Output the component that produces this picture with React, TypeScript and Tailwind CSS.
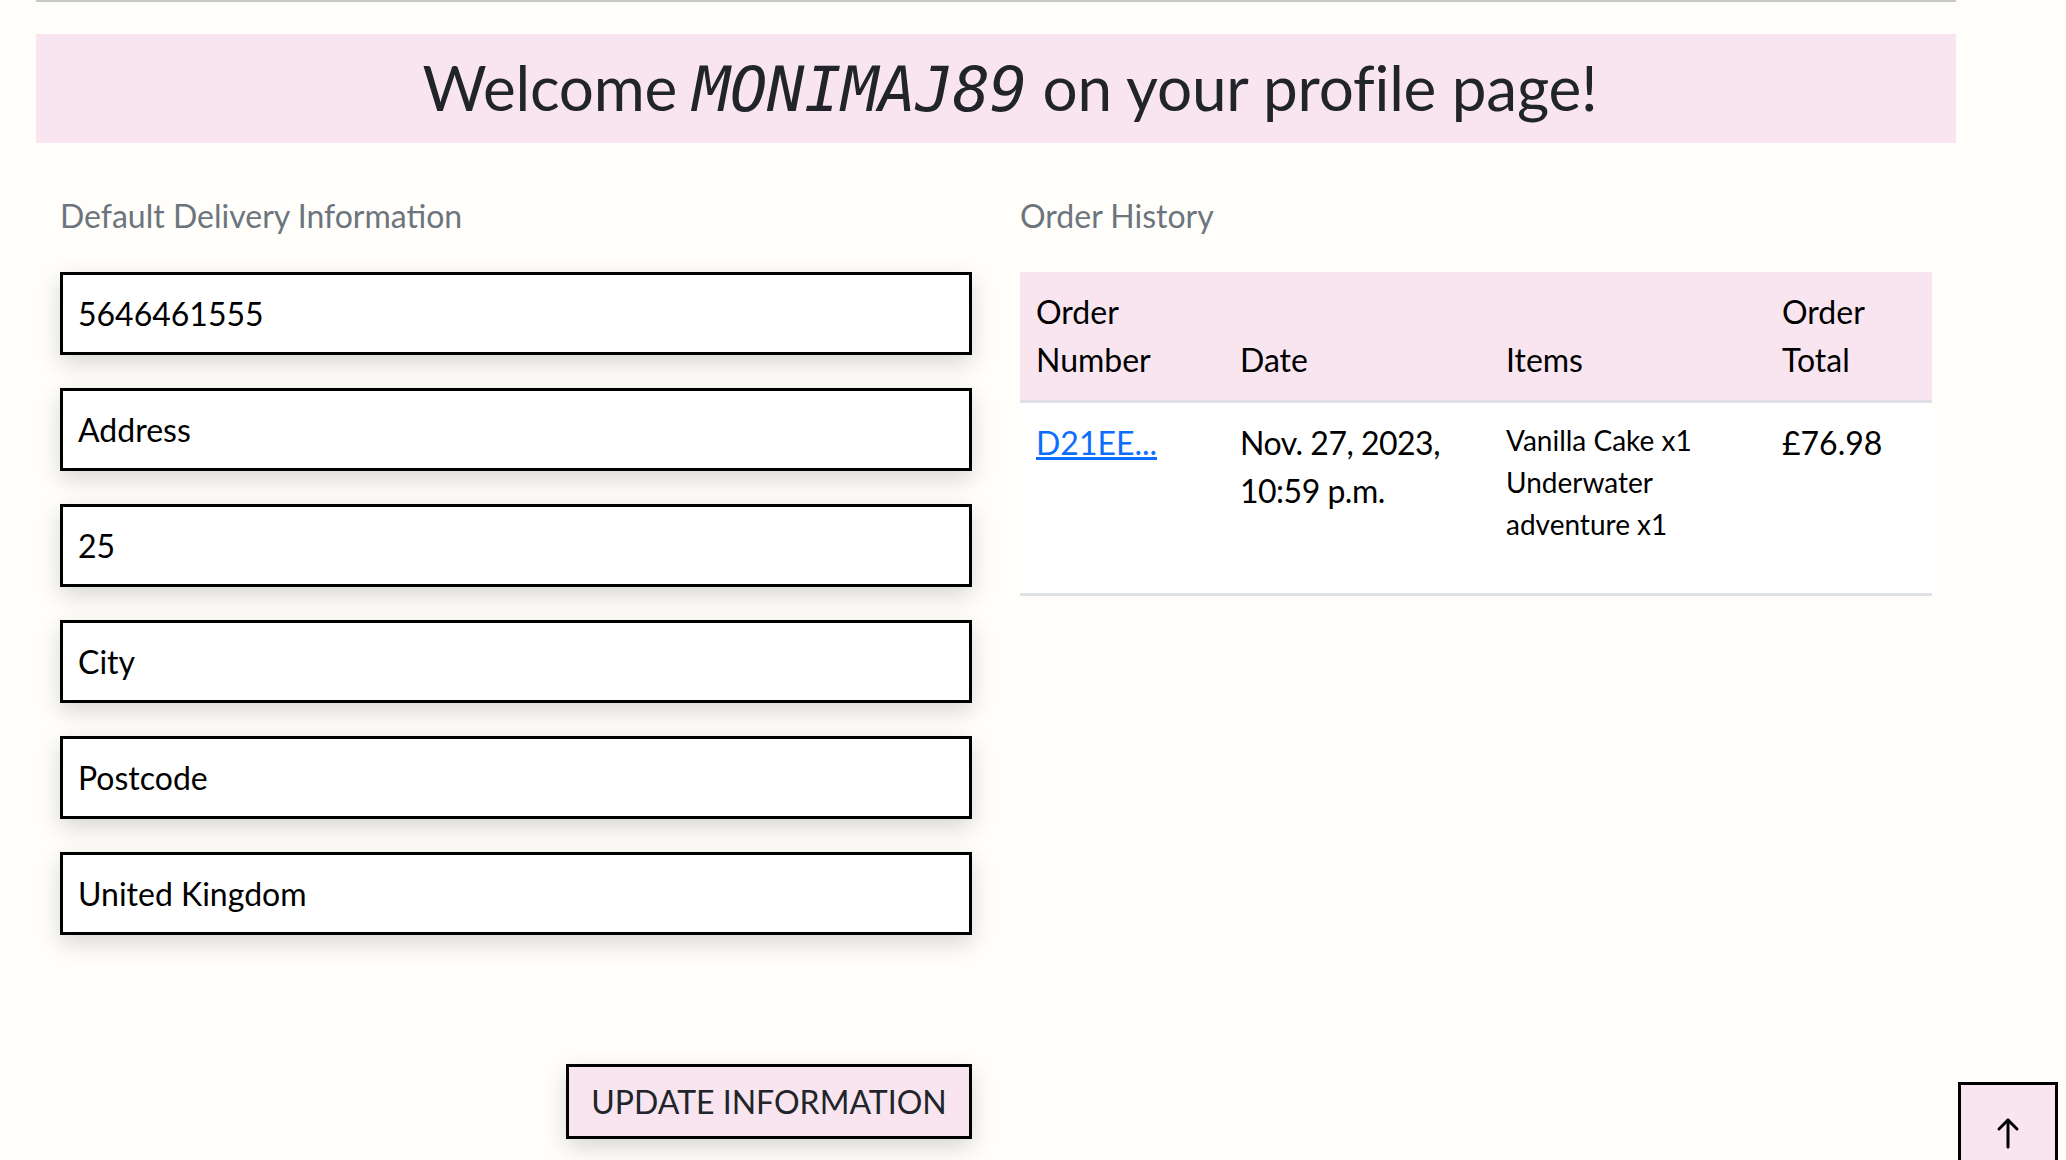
import React from "react";

const fields = ["5646461555", "Address", "25", "City", "Postcode", "United Kingdom"];

const App: React.FC = () => {
  return (
    <div className="min-h-screen bg-[#fffefa] font-['Lato','Noto_Sans',sans-serif] text-[#212529]">
      <div className="ml-[36px] h-[2px] w-[1920px] bg-[#c8c8c8]"></div>

      {/* Banner */}
      <div className="ml-[36px] mt-[32px] flex h-[109px] w-[1920px] items-center justify-center bg-[#f8e5ef] pl-[28px]">
        <h1 className="text-[62px] leading-none tracking-[-0.2px]">
          Welcome{" "}
          <span className="font-['DejaVu_Sans_Mono',monospace] text-[62px] italic">MONIMAJ89</span>{" "}
          on your profile page!
        </h1>
      </div>

      <div className="ml-[36px] grid w-[1920px] grid-cols-2">
        {/* Delivery info */}
        <div className="px-[24px]">
          <h2 className="mt-[54px] text-[32px] leading-[1.2] text-[#6c757d]">
            Default Delivery Information
          </h2>
          <div className="mt-[37px] flex flex-col gap-[33px]">
            {fields.map((f, i) => (
              <div
                key={i}
                className="flex h-[83px] items-center border-[3px] border-black bg-white px-[15px] text-[32px] text-black shadow-[0_8px_22px_rgba(0,0,0,0.16)]"
              >
                {f}
              </div>
            ))}
          </div>
          <div className="mt-[129px] flex justify-end">
            <button className="h-[75px] w-[406px] border-[3px] border-black bg-[#f8e5ef] text-[32px] text-[#212529] shadow-[0_8px_22px_rgba(0,0,0,0.16)]">
              UPDATE INFORMATION
            </button>
          </div>
        </div>

        {/* Order history */}
        <div className="px-[24px]">
          <h2 className="mt-[54px] text-[32px] leading-[1.2] text-[#6c757d]">Order History</h2>
          <table className="mt-[37px] w-full table-fixed border-collapse text-left text-[32px] leading-[1.5] text-black">
            <thead>
              <tr className="border-b-[3px] border-[#dee2e6] bg-[#f8e5ef]">
                <th className="w-[204px] p-[16px] align-bottom font-normal">Order Number</th>
                <th className="w-[266px] p-[16px] align-bottom font-normal">Date</th>
                <th className="w-[276px] p-[16px] align-bottom font-normal">Items</th>
                <th className="p-[16px] align-bottom font-normal">Order Total</th>
              </tr>
            </thead>
            <tbody>
              <tr className="border-b-[3px] border-[#dee2e6] bg-white">
                <td className="p-[16px] align-top">
                  <a href="#" className="text-[#0d6efd] underline">
                    D21EE...
                  </a>
                </td>
                <td className="p-[16px] align-top tracking-[-0.5px]">Nov. 27, 2023, 10:59 p.m.</td>
                <td className="p-[16px] align-top">
                  <p className="mb-[32px] text-[28px] leading-[1.5]">
                    Vanilla Cake x1
                    <br />
                    Underwater adventure x1
                  </p>
                </td>
                <td className="p-[16px] align-top">£76.98</td>
              </tr>
            </tbody>
          </table>
        </div>
      </div>

      {/* Back to top */}
      <button className="fixed left-[1958px] top-[1082px] flex h-[100px] w-[100px] items-start justify-center border-[3px] border-black bg-[#f8e5ef] pt-[32px]">
        <svg width="26" height="32" viewBox="0 0 26 32" fill="none" stroke="black" strokeWidth="3" strokeLinecap="round" strokeLinejoin="round">
          <path d="M13 30V3" />
          <path d="M4 12l9-9 9 9" />
        </svg>
      </button>
    </div>
  );
};

export default App;
